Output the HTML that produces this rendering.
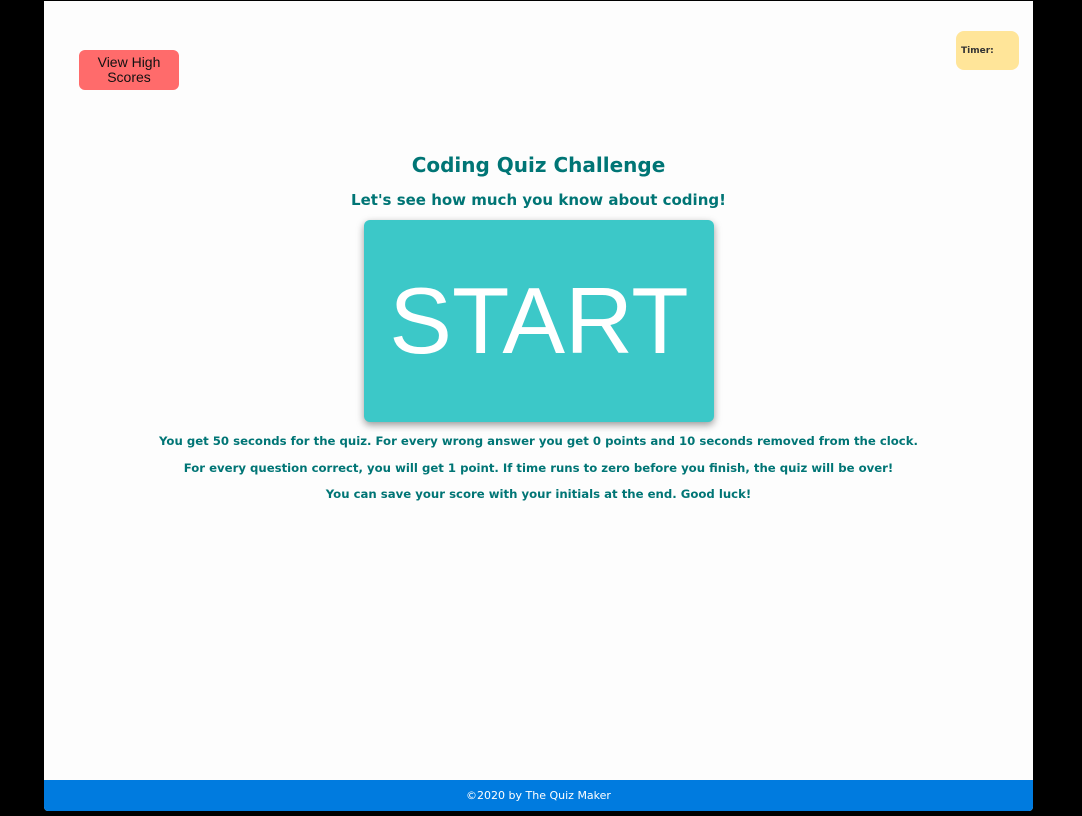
<!DOCTYPE html>
<html><head><style>
html,body{margin:0;padding:0;background:#000;width:1082px;height:816px;overflow:hidden}
#page{position:absolute;left:44px;top:1px;width:989px;height:810px;background:#fdfdfd;border-radius:0 0 4px 4px;overflow:hidden}
.hs{position:absolute;left:35px;top:49px;width:100px;height:40px;background:#ff6b6b;border-radius:6px;font:14px/15px "Liberation Sans",sans-serif;color:#111;text-align:center;display:flex;align-items:center;justify-content:center}
.timer{position:absolute;left:912px;top:30px;width:63px;height:39px;background:#ffe599;border-radius:8px;font:bold 9px "DejaVu Sans",sans-serif;color:#333;display:flex;align-items:center;padding-left:5px;box-sizing:border-box}
.t{position:absolute;left:0;width:989px;text-align:center;color:#007575;font-family:"DejaVu Sans",Verdana,sans-serif;font-weight:bold}
.start{position:absolute;left:320px;top:219px;width:350px;height:202px;background:#3cc8c8;border-radius:6px;box-shadow:0 3px 8px rgba(0,0,0,.4);color:#fff;font:94px "Liberation Sans",sans-serif;display:flex;align-items:center;justify-content:center}
.foot{position:absolute;left:0;top:779px;width:989px;height:31px;background:#007bdf;color:#fff;font:11px "DejaVu Sans",sans-serif;text-align:center;line-height:31px}
</style></head><body>
<div id="page">
<div class="hs">View High<br>Scores</div>
<div class="timer">Timer:</div>
<div class="t" style="top:152px;font-size:20px">Coding Quiz Challenge</div>
<div class="t" style="top:190px;font-size:15px">Let's see how much you know about coding!</div>
<div class="start">START</div>
<div class="t" style="top:433px;font-size:11.7px">You get 50 seconds for the quiz. For every wrong answer you get 0 points and 10 seconds removed from the clock.</div>
<div class="t" style="top:460px;font-size:11.7px">For every question correct, you will get 1 point. If time runs to zero before you finish, the quiz will be over!</div>
<div class="t" style="top:486px;font-size:11.7px">You can save your score with your initials at the end. Good luck!</div>
<div class="foot">©2020 by The Quiz Maker</div>
</div>
</body></html>
